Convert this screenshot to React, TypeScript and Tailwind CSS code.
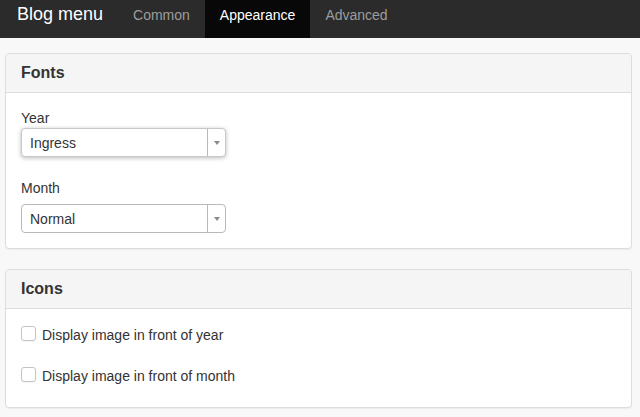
const tabs = [
  { label: "Common", active: false },
  { label: "Appearance", active: true },
  { label: "Advanced", active: false },
];

function Panel({ title, children, bodyClass }: { title: string; children: React.ReactNode; bodyClass: string }) {
  return (
    <div className="bg-white border border-[#dddddd] rounded-[4px] shadow-[0_1px_1px_rgba(0,0,0,0.05)] overflow-hidden">
      <div className="bg-[#f5f5f5] border-b border-[#dddddd] px-[15px] pt-[10px] pb-[10px]">
        <h3 className="text-[16px] leading-[18px] font-bold text-[#333333]">{title}</h3>
      </div>
      <div className={bodyClass}>{children}</div>
    </div>
  );
}

function Select({ value, focused }: { value: string; focused?: boolean }) {
  return (
    <div
      className={
        "flex h-[29px] w-[205px] items-stretch rounded-[4px] border bg-white " +
        (focused
          ? "border-[#c8c8c8] shadow-[0_1px_4px_rgba(0,0,0,0.28)]"
          : "border-[#b9b9b9]")
      }
    >
      <span className="flex-1 flex items-center pl-[8px] pt-[1px] text-[14px] leading-[20px] text-[#333333]">
        {value}
      </span>
      <span className="w-[18px] border-l border-[#b9b9b9] flex items-center justify-center">
        <svg width="6" height="4" viewBox="0 0 6 4">
          <path d="M0 0 H6 L3 4 Z" fill="#8a8a8a" />
        </svg>
      </span>
    </div>
  );
}

function Check({ label }: { label: string }) {
  return (
    <label className="flex items-start h-[20px] text-[14px] leading-[20px] text-[#333333]">
      <span className="mt-[1px] mr-[6px] h-[15px] w-[15px] rounded-[3px] border border-[#c4c4c4] bg-white shadow-[0_1px_1px_rgba(0,0,0,0.04)]" />
      {label}
    </label>
  );
}

export default function App() {
  return (
    <div className="min-h-screen bg-[#f8f8f8] font-['Liberation_Sans',Arial,sans-serif] text-[#333333]">
      <nav className="flex h-[38px] bg-[#2b2b2b]">
        <span className="pl-[17px] pr-[15px] pt-[4px] text-[18px] leading-[20px] text-white">Blog menu</span>
        <ul className="flex">
          {tabs.map((tab) => (
            <li
              key={tab.label}
              className={
                "h-full px-[15px] pt-[5px] text-[14px] leading-[20px] " +
                (tab.active ? "bg-[#080808] text-white" : "text-[#9d9d9d]")
              }
            >
              {tab.label}
            </li>
          ))}
        </ul>
      </nav>

      <div className="pt-[15px] pl-[5px] pr-[8px] flex flex-col gap-[20px]">
        <Panel title="Fonts" bodyClass="px-[15px] pt-[15px] pb-[15px]">
          <div className="text-[14px] leading-[20px]">Year</div>
          <Select value="Ingress" focused />
          <div className="mt-[21px] text-[14px] leading-[20px]">Month</div>
          <div className="mt-[6px]">
            <Select value="Normal" />
          </div>
        </Panel>

        <Panel title="Icons" bodyClass="px-[15px] pt-[16px] pb-[21px] flex flex-col gap-[21px]">
          <Check label="Display image in front of year" />
          <Check label="Display image in front of month" />
        </Panel>
      </div>
    </div>
  );
}
